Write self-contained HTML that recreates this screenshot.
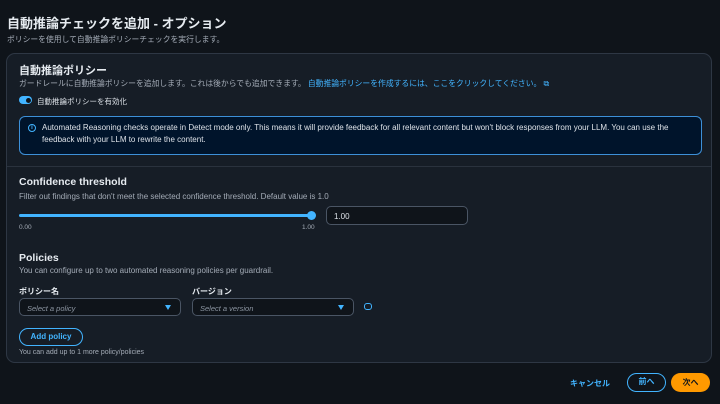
<!DOCTYPE html>
<html><head><meta charset="utf-8"><style>
*{margin:0;padding:0;box-sizing:border-box}
body{width:720px;height:404px;background:#0f141a;color:#dde2e8;font-family:"Liberation Sans","Noto Sans CJK JP",sans-serif;position:relative;overflow:hidden}
.a{position:absolute;white-space:nowrap}
.s{font-size:7.5px;color:#a4acb7}
.e{font-size:8px}
.b{font-weight:bold;color:#e6ebf0}
.box{position:absolute;left:6px;top:53px;width:706px;height:310px;border:1px solid #2e3744;border-radius:9px;background:#161d26}
.info{position:absolute;left:19px;top:116px;width:683px;height:39px;border:1px solid #3d90d8;border-radius:6px;background:#00142b}
.sel{position:absolute;top:298px;height:18px;border:1px solid #4a5564;border-radius:5px;background:#0f141a;font-size:7.5px;font-style:italic;color:#8c95a1;padding:5px 0 0 7px}
.tri{position:absolute;right:9px;top:6px;width:0;height:0;border-left:3px solid transparent;border-right:3px solid transparent;border-top:5px solid #42b4ff}
</style></head><body>
<div class="a b" style="left:7px;top:13px;font-size:13px">自動推論チェックを追加 - オプション</div>
<div class="a s" style="left:7px;top:34px;font-size:7.8px">ポリシーを使用して自動推論ポリシーチェックを実行します。</div>
<div class="box"></div>
<div class="a b" style="left:19px;top:62px;font-size:11px">自動推論ポリシー</div>
<div class="a s" style="left:19px;top:78px;font-size:7.8px">ガードレールに自動推論ポリシーを追加します。これは後からでも追加できます。 <span style="color:#42b4ff">自動推論ポリシーを作成するには、ここをクリックしてください。 ⧉</span></div>
<div class="a" style="left:19px;top:96px;width:13px;height:8px;border-radius:4px;background:#42b4ff"><div style="position:absolute;right:1.5px;top:1.5px;width:5px;height:5px;border-radius:50%;background:#0f141a"></div></div>
<div class="a" style="left:37px;top:96px;font-size:7.5px;color:#dde2e8">自動推論ポリシーを有効化</div>
<div class="info"></div>
<div class="a" style="left:28px;top:124px;width:8px;height:8px;border:1.2px solid #42b4ff;border-radius:50%;font-size:6px;font-weight:bold;color:#42b4ff;text-align:center;line-height:6px">i</div>
<div class="a" style="left:42px;top:122px;font-size:8px;line-height:12px;color:#dde2e8">Automated Reasoning checks operate in Detect mode only. This means it will provide feedback for all relevant content but won't block responses from your LLM. You can use the<br>feedback with your LLM to rewrite the content.</div>
<div class="a" style="left:7px;top:166px;width:704px;height:1px;background:#2a323d"></div>
<div class="a b" style="left:19px;top:176px;font-size:10.5px">Confidence threshold</div>
<div class="a s e" style="left:19px;top:192px">Filter out findings that don't meet the selected confidence threshold. Default value is 1.0</div>
<div class="a" style="left:19px;top:214px;width:292px;height:3px;border-radius:2px;background:#42b4ff"></div>
<div class="a" style="left:307px;top:211px;width:9px;height:9px;border-radius:50%;background:#42b4ff"></div>
<div class="a" style="left:326px;top:206px;width:142px;height:19px;border:1px solid #4a5564;border-radius:5px;background:#0f141a;font-size:8px;padding:5px 0 0 7px;color:#dde2e8">1.00</div>
<div class="a s" style="left:19px;top:224px;font-size:6.5px">0.00</div>
<div class="a s" style="left:302px;top:224px;font-size:6.5px">1.00</div>
<div class="a b" style="left:19px;top:252px;font-size:10.5px">Policies</div>
<div class="a s e" style="left:19px;top:266px">You can configure up to two automated reasoning policies per guardrail.</div>
<div class="a b" style="left:19px;top:286px;font-size:8px">ポリシー名</div>
<div class="a b" style="left:192px;top:286px;font-size:8px">バージョン</div>
<div class="sel" style="left:19px;width:162px">Select a policy<div class="tri"></div></div>
<div class="sel" style="left:192px;width:162px">Select a version<div class="tri"></div></div>
<div class="a" style="left:364px;top:303px;width:8px;height:7px;border:1.5px solid #42b4ff;border-radius:3px"></div>
<div class="a" style="left:19px;top:328px;width:64px;height:18px;border:1.5px solid #42b4ff;border-radius:9px;font-size:8px;font-weight:bold;color:#42b4ff;text-align:center;line-height:15px">Add policy</div>
<div class="a s" style="left:19px;top:349px;font-size:7px">You can add up to 1 more policy/policies</div>
<div class="a" style="left:570px;top:378px;font-size:8px;font-weight:bold;color:#42b4ff">キャンセル</div>
<div class="a" style="left:627px;top:373px;width:39px;height:19px;border:1.5px solid #42b4ff;border-radius:10px;font-size:8px;font-weight:bold;color:#42b4ff;text-align:center;line-height:16px">前へ</div>
<div class="a" style="left:671px;top:373px;width:39px;height:19px;background:#ff9900;border-radius:10px;font-size:8px;font-weight:bold;color:#0f141a;text-align:center;line-height:19px">次へ</div>
</body></html>
